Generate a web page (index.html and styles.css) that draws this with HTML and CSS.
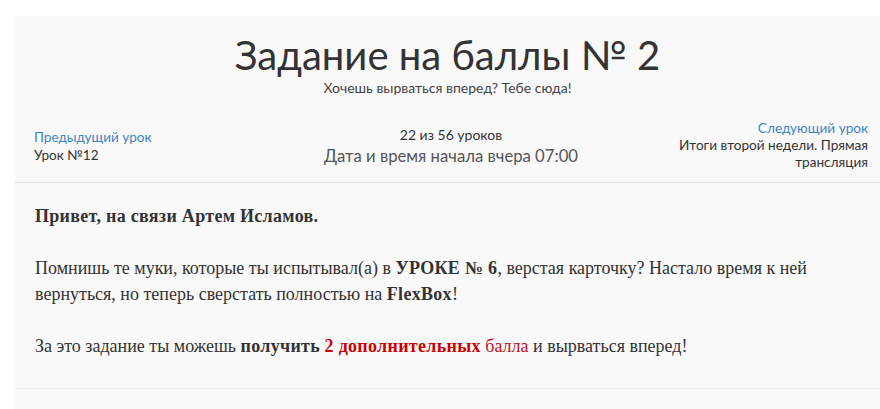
FILE: index.html
```html
<!DOCTYPE html>
<html lang="ru">
<head>
<meta charset="utf-8">
<title>Задание на баллы № 2</title>
<link rel="stylesheet" href="styles.css">
</head>
<body>
<div class="page">
  <div class="panel">
    <div class="head">
      <h1 class="title">Задание на баллы № 2</h1>
      <p class="subtitle">Хочешь вырваться вперед? Тебе сюда!</p>
      <div class="nav">
        <div class="nav-prev">
          <a class="nav-link" href="#">Предыдущий урок</a>
          <div class="nav-name">Урок №12</div>
        </div>
        <div class="nav-center">
          <div class="count">22 из 56 уроков</div>
          <div class="date">Дата и время начала вчера 07:00</div>
        </div>
        <div class="nav-next">
          <a class="nav-link" href="#">Следующий урок</a>
          <div class="nav-name">Итоги второй недели. Прямая трансляция</div>
        </div>
      </div>
    </div>
    <div class="content">
      <p><b>Привет, на связи Артем Исламов.</b></p>
      <p>Помнишь те муки, которые ты испытывал(а) в <b>УРОКЕ № 6</b>, верстая карточку? Настало время к ней вернуться, но теперь сверстать полностью на <b>FlexBox</b>!</p>
      <p>За это задание ты можешь <b>получить</b> <b class="red">2 дополнительных</b> <span class="red2">балла</span> и вырваться вперед!</p>
    </div>
    <div class="foot"></div>
  </div>
</div>
</body>
</html>
```
FILE: styles.css
```css
html, body {
  margin: 0;
  padding: 0;
  background: #ffffff;
}
.page {
  padding: 16px 0 0 15px;
  font-family: "Lato", "Open Sans", sans-serif;
  color: #333333;
}
.panel {
  background: #f9f9f9;
}
.head {
  text-align: center;
  padding-top: 15px;
  border-bottom: 1px solid #dddddd;
}
.title {
  margin: 0;
  font-size: 40px;
  font-weight: 400;
  line-height: 48px;
  color: #333333;
}
.subtitle {
  margin: 0;
  font-size: 14px;
  line-height: 18px;
  color: #444444;
}
.nav {
  display: grid;
  grid-template-columns: 1fr auto 1fr;
  align-items: center;
  padding: 23px 12px 11px 19px;
}
.nav-prev {
  text-align: left;
  font-size: 13.5px;
  line-height: 18px;
}
.nav-next {
  justify-self: end;
  text-align: right;
  width: 200px;
  font-size: 13.6px;
  line-height: 17px;
}
.nav-link {
  display: block;
  color: #3a86c4;
  text-decoration: none;
}
.nav-name {
  color: #333333;
}
.count {
  font-size: 14px;
  line-height: 20px;
}
.date {
  font-size: 16.7px;
  line-height: 22px;
  color: #555555;
}
.content {
  padding: 20px 20px 29px 20px;
  font-family: "Liberation Serif", "Times New Roman", serif;
  font-size: 18px;
  line-height: 26px;
  color: #333333;
  border-bottom: 1px solid #eeeeee;
}
.content p {
  margin: 0 0 26px 0;
}
.content p:last-child {
  margin-bottom: 0;
}
.content b {
  letter-spacing: 0.3px;
}
.red {
  color: #cc0000;
}
.red2 {
  color: #b3151b;
}
.foot {
  height: 20px;
}
```
